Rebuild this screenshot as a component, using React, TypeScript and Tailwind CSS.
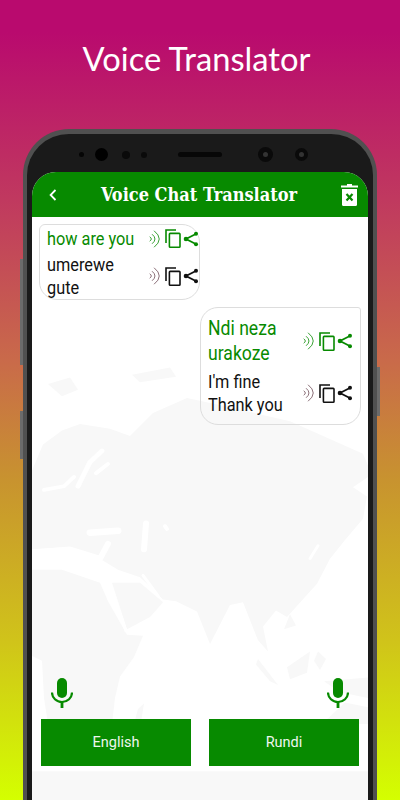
// Voice chat translator store screenshot

function SpeakerWaves({ color }: { color: string }) {
  return (
    <svg width="11" height="18" viewBox="0 0 11 18" fill="none" stroke={color} strokeWidth="0.8" strokeLinecap="round">
      <path d="M1 7q3 2 0 4" />
      <path d="M3.4 4.5q5.4 4.5 0 9" />
      <path d="M5.4 1q10 8 0 16" />
    </svg>
  );
}

function CopyIcon({ color }: { color: string }) {
  return (
    <svg width="16" height="19" viewBox="0 0 16 19" fill="none" stroke={color} strokeWidth="1.6">
      <path d="M1 14V1h10" />
      <rect x="4.4" y="4.4" width="10.6" height="13.8" rx="0.8" />
    </svg>
  );
}

function ShareIcon({ color }: { color: string }) {
  return (
    <svg width="16" height="16" viewBox="0 0 16 16" fill={color} stroke={color} strokeWidth="1.8">
      <path d="M12.8 3 3 8l9.8 5" fill="none" />
      <circle cx="13" cy="2.8" r="2" strokeWidth="0" />
      <circle cx="3" cy="8" r="2.3" strokeWidth="0" />
      <circle cx="13" cy="13.2" r="2" strokeWidth="0" />
    </svg>
  );
}

function MicIcon() {
  return (
    <svg width="22" height="30" viewBox="0 0 22 30" fill="#078a00">
      <rect x="6" y="0" width="10" height="20" rx="5" />
      <path d="M1 14.5a10 9.5 0 0 0 20 0" fill="none" stroke="#078a00" strokeWidth="2.2" />
      <rect x="9.6" y="23" width="2.8" height="7" />
    </svg>
  );
}

function MessageRow({ lines, color, big }: { lines: string[]; color: string; big?: boolean }) {
  const waves = color === "#078a00" ? "#078a00" : "#6d4a55";
  return (
    <div className="flex items-center justify-between">
      <div
        className={
          big
            ? "origin-left scale-x-[0.88] whitespace-nowrap text-[20px] leading-[25px]"
            : "origin-left scale-x-[0.905] whitespace-nowrap text-[18px] leading-[23px]"
        }
        style={{ color }}
      >
        {lines.map((l) => (
          <div key={l}>{l}</div>
        ))}
      </div>
      <div className="flex items-center">
        <SpeakerWaves color={waves} />
        <div className="ml-[5px]">
          <CopyIcon color={color} />
        </div>
        <div className="ml-[2px]">
          <ShareIcon color={color} />
        </div>
      </div>
    </div>
  );
}

function WorldMap() {
  return (
    <svg className="absolute inset-0 h-full w-full" viewBox="32 172 336 628" preserveAspectRatio="none">
      <g fill="#f8f8f8">
        {/* eurasia */}
        <path d="M32 445 43 417 62 402 80 395 110 400 130 408 153 383 187 367 230 377 290 392 363 427 368 440V452L353 463 367 473 363 497 345 520 330 540 317 567 287 603 276 596 263 613 268 640 258 628 243 587 230 590 210 632 197 597 176 586 163 584 150 570 140 560 118 552 100 540 60 528 32 530Z" />
        {/* arabia */}
        <path d="M112 566 140 566 163 587 150 603 127 616Z" />
        {/* africa */}
        <path d="M32 552 62 552 100 566 108 586 127 622 143 623 134 646 120 667 115 690 112 718H48L44 690 42 650 32 645Z" />
        <path d="M138 702 144 696 141 716 133 722Z" />
        {/* arctic islands */}
        <path d="M48 352 70 345 78 358 62 365ZM132 342 170 334 176 344 140 350Z" />
        {/* south east asia */}
        <path d="M258 648 278 676 270 672 256 654ZM287 657 310 640 307 663 290 670ZM318 640 326 648 320 660 314 650ZM324 672 368 668V690L340 684ZM322 718 345 695 368 700V718Z" />
        <path d="M290 600 296 612 284 616Z" />
        {/* lower band */}
        <path d="M32 769H368V800H32Z" />
      </g>
      <g fill="none" stroke="#ffffff" strokeLinecap="round" strokeLinejoin="round">
        <path d="M78 462 90 436 102 424" strokeWidth="5" />
        <path d="M108 438 96 448" strokeWidth="4" />
        <path d="M44 466 64 462 74 452" strokeWidth="4" />
        <path d="M36 533 70 530 100 540 108 524" strokeWidth="6" />
        <path d="M90 512 118 510" strokeWidth="7" />
        <path d="M146 502 144 530" strokeWidth="6" />
        <path d="M165 505 167 508" strokeWidth="4" />
        <path d="M318 526 310 540" strokeWidth="3" />
        <path d="M110 568 126 618" strokeWidth="3" />
        <path d="M143 558 158 580" strokeWidth="3" />
      </g>
    </svg>
  );
}

export default function App() {
  return (
    <div
      className="relative flex h-[800px] w-[400px] flex-col overflow-hidden bg-[linear-gradient(180deg,#b90a6e_0%,#b90a6e_4%,#c0395f_25%,#c96a4a_45%,#c8932f_60%,#d0c31a_80%,#d4ff00_100%)]"
      style={{ fontFamily: "Roboto, sans-serif" }}
    >
      <div className="flex h-[129px] shrink-0 items-start justify-center pr-[7px] pt-[37px]">
        <h1 className="text-[32.7px] leading-[44px] text-white" style={{ fontFamily: "Lato, sans-serif" }}>
          Voice Translator
        </h1>
      </div>

      <div className="relative mx-[23px] flex flex-1 flex-col rounded-t-[46px] border-x-[4px] border-t-[5px] border-[#505050] bg-[#1a1a1a]">
        {/* side keys */}
        <div className="absolute left-[-7px] top-[125px] h-[106px] w-[3px] bg-[#6b6b6b]" />
        <div className="absolute left-[-7px] top-[277px] h-[48px] w-[3px] bg-[#6b6b6b]" />
        <div className="absolute right-[-7px] top-[233px] h-[49px] w-[3px] bg-[#6b6b6b]" />

        {/* camera bar */}
        <div className="relative flex h-[38px] shrink-0 items-center pl-[52px] pt-[3px]">
          <span className="h-[5px] w-[5px] rounded-full bg-[#050505]" />
          <span className="ml-[11px] h-[13px] w-[13px] rounded-full bg-black" />
          <span className="ml-[14px] h-[8px] w-[8px] rounded-full bg-[#0a0a0a]" />
          <span className="ml-[11px] h-[6px] w-[6px] rounded-full bg-[#0a0a0a]" />
          <span className="ml-[31px] h-[5px] w-[44px] rounded-full bg-[#070707]" />
          <span className="ml-[36px] flex h-[15px] w-[15px] items-center justify-center rounded-full bg-[#0a0a0a]">
            <span className="h-[5px] w-[5px] rounded-full bg-[#333]" />
          </span>
          <span className="ml-[22px] flex h-[13px] w-[13px] items-center justify-center rounded-full bg-[#0a0a0a]">
            <span className="h-[5px] w-[5px] rounded-full bg-[#333]" />
          </span>
        </div>

        <div className="mx-[5px] flex flex-1 flex-col overflow-hidden rounded-t-[24px] bg-white">
          <div className="relative flex h-[45px] shrink-0 items-center justify-between bg-[#078a00] pl-[17px] pr-[10px]">
            <svg width="8" height="14" viewBox="0 0 8 14" fill="none" stroke="white" strokeWidth="1.8">
              <path d="M6.5 2 1.6 7l4.9 5" />
            </svg>
            <span
              className="text-[18px] font-bold leading-[24px] text-white"
              style={{ fontFamily: "'DejaVu Serif Condensed', 'DejaVu Serif', serif", fontStretch: "condensed" }}
            >
              Voice Chat Translator
            </span>
            <svg width="17" height="22" viewBox="0 0 17 22" fill="white">
              <path d="M6 0h5v1.4h6v2H0v-2h6z" />
              <path d="M1 5h15v15.5a1.5 1.5 0 0 1-1.5 1.5h-12A1.5 1.5 0 0 1 1 20.5z" />
              <path d="m5.5 10 6 6.5m0-6.5-6 6.5" stroke="#078a00" strokeWidth="2.2" />
            </svg>
          </div>

          <div className="relative flex flex-1 flex-col px-[7px] pt-[7px]">
            <WorldMap />
            <div className="relative w-[161px] rounded-[18px] rounded-tl-[6px] border border-[#dddddd] pl-[7px] pt-[2px]">
              <MessageRow lines={["how are you"]} color="#078a00" />
              <div className="h-[3px]" />
              <MessageRow lines={["umerewe", "gute"]} color="#111111" />
            </div>
            <div className="relative ml-[161px] mt-[7px] w-[161px] rounded-[18px] rounded-tr-[3px] border border-[#dddddd] pb-[8px] pl-[7px] pr-[7px] pt-[8px]">
              <MessageRow lines={["Ndi neza", "urakoze"]} color="#078a00" big />
              <div className="h-[4px]" />
              <MessageRow lines={["I'm fine", "Thank you"]} color="#111111" />
            </div>

            <div className="relative mt-auto flex justify-between px-[12px]">
              <MicIcon />
              <MicIcon />
            </div>
            <div className="relative mb-[34px] mt-[11px] flex justify-between px-[2px]">
              <button className="h-[47px] w-[150px] bg-[#078a00] pt-[1px] text-[14.5px] text-[#eef7ee]">English</button>
              <button className="h-[47px] w-[150px] bg-[#078a00] pt-[1px] text-[14.5px] text-[#eef7ee]">Rundi</button>
            </div>
          </div>
        </div>
      </div>
    </div>
  );
}
